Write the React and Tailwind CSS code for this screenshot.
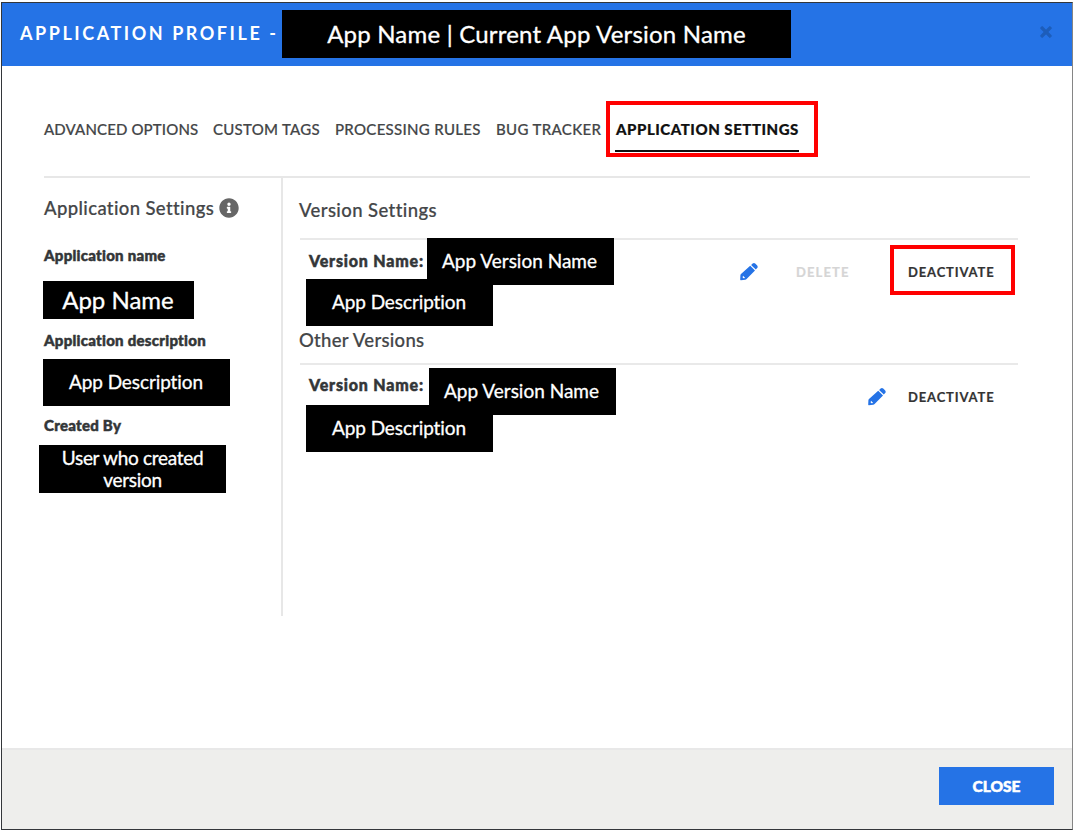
import React from "react";
import { FaInfoCircle, FaTimes } from "react-icons/fa";

function Pencil({ className = "" }) {
  return (
    <svg viewBox="0 0 18 18" width="18" height="18" className={"shrink-0 " + className}>
      <path
        fill="#2573e6"
        fillRule="evenodd"
        d="M.4 12.2Q.5 11.5 1 11L10.2 2.7 15 7.4 6.6 16Q6 16.7 5.2 16.7L.9 17.2Q.2 17.3.2 16.5Z M3 12.8 2.6 14.4 3.6 15.3 5.2 14.9Z"
      />
      <path fill="#2573e6" d="M11.1 1.9 12.6.6Q14 -.4 15.2 .6L17.2 2.6Q18.2 3.9 17.2 5.1L15.8 6.6Z" />
    </svg>
  );
}

function Mask({ className = "", children }) {
  return (
    <div className={"flex shrink-0 items-center justify-center bg-black text-center whitespace-nowrap text-white [-webkit-text-stroke:0.3px] " + className}>
      {children}
    </div>
  );
}

function Tab({ className = "", children }) {
  return <span className={"mt-[18px] block shrink-0 whitespace-nowrap text-[#444648] " + className}>{children}</span>;
}

function Label({ className = "", children }) {
  return (
    <b className={"block text-[15px] leading-[20px] font-black tracking-[0.27px] text-[#333638] [-webkit-text-stroke:0.5px] " + className}>
      {children}
    </b>
  );
}

function Version({ rowClass, labelClass, nameClass, descClass, children }) {
  return (
    <div className={"flex justify-between border-t-2 border-[#e9e9e9] " + rowClass}>
      <div className="w-[320px]">
        <div className="flex items-start">
          <b className={"ml-[9px] block w-[118px] shrink-0 text-[16px] leading-[20px] font-black tracking-[0.8px] whitespace-nowrap text-[#333638] [-webkit-text-stroke:0.5px] " + labelClass}>Version Name:</b>
          <Mask className={"h-[47px] w-[187px] pr-[2px] pb-px text-[19px] leading-6 " + nameClass}>App Version Name</Mask>
        </div>
        <Mask className={"ml-[6px] h-[47px] w-[187px] pr-px pb-px text-[19px] leading-6 tracking-[-0.1px] " + descClass}>App Description</Mask>
      </div>
      {children}
    </div>
  );
}

export default function App() {
  return (
    <div className="h-[834px] w-[1078px] overflow-hidden bg-white pt-[2px] pl-px font-['Lato',sans-serif] text-[#444648]">
      <div className="flex h-[828px] w-[1072px] flex-col border border-[#33363a] border-r-[#858585] bg-white">
        <header className="flex h-[63px] shrink-0 items-start bg-[#2573e6] pl-[18px] text-white">
          <h1 className="w-[262px] shrink-0 pt-[18px] text-[18px] leading-6 font-bold tracking-[2.55px] whitespace-nowrap">APPLICATION PROFILE -</h1>
          <Mask className="mt-[7px] h-[48px] w-[509px] text-[24px] tracking-[0.2px]">App Name | Current App Version Name</Mask>
          <button className="mt-[21px] ml-[247px] text-[#1d5dba]"><FaTimes size={16} className="[stroke-width:20] [stroke:currentColor]" /></button>
        </header>

        <main className="h-[682px] shrink-0 pl-[42px] [-webkit-text-stroke:0.2px]">
          <nav className="flex h-[112px] w-[986px] items-start border-b-2 border-[#e7e7e7] pt-[35px] text-[15px] leading-[20px] font-medium">
            <Tab className="w-[169px] tracking-[0.13px]">ADVANCED OPTIONS</Tab>
            <Tab className="w-[122px] tracking-[0.27px]">CUSTOM TAGS</Tab>
            <Tab className="w-[161px] tracking-[0.3px]">PROCESSING RULES</Tab>
            <Tab className="w-[110px] tracking-[0.35px]">BUG TRACKER</Tab>
            <div className="h-[56px] w-[212px] shrink-0 border-4 border-[#ff0000] pt-[14px] pl-[5px]">
              <div className="h-[33px] w-[184px] border-b-2 border-[#111] pl-px font-black tracking-[0.53px] whitespace-nowrap text-[#111]">APPLICATION SETTINGS</div>
            </div>
          </nav>

          <div className="flex h-[438px]">
            <aside className="w-[239px] shrink-0 border-r-2 border-[#e7e7e7]">
              <h2 className="flex items-center pt-[18px] text-[18.5px] leading-6 font-medium tracking-[0.37px] whitespace-nowrap">
                <span className="w-[175px]">Application Settings</span>
                <FaInfoCircle size={20} color="#666" />
              </h2>
              <Label className="mt-[25px]">Application name</Label>
              <Mask className="-ml-px mt-[16px] h-[38px] w-[151px] pr-px text-[24px]">App Name</Mask>
              <Label className="mt-[11px]">Application description</Label>
              <Mask className="-ml-px mt-[9px] h-[47px] w-[187px] pr-px pb-px text-[19px] tracking-[-0.1px]">App Description</Mask>
              <Label className="mt-[9px]">Created By</Label>
              <Mask className="-ml-[5px] mt-[10px] h-[48px] w-[187px] pb-px text-[19px] leading-[22px] tracking-[-0.3px]">User who created<br />version</Mask>
            </aside>

            <section className="ml-[17px] w-[718px]">
              <h2 className="-ml-px h-[60px] pt-[20px] text-[18.5px] leading-6 font-medium tracking-[0.4px]">Version Settings</h2>
              <Version rowClass="h-[89px]" labelClass="pt-[11px]" nameClass="-mt-[2px]" descClass="-mt-[6px]">
                <div className="flex h-[57px] items-start text-[13px] leading-[18px] font-bold">
                  <Pencil className="mt-[23px]" />
                  <span className="mt-[23px] ml-[38px] w-[94px] tracking-[1.1px] text-[#d5d5d5]">DELETE</span>
                  <button className="mt-[5px] mr-[3px] h-[50px] w-[125px] border-4 border-[#ff0000] pt-[3px] pl-[14px] text-left font-bold tracking-[0.85px] whitespace-nowrap text-[#333]">DEACTIVATE</button>
                </div>
              </Version>
              <h2 className="-ml-px h-[36px] pt-px text-[18.5px] leading-6 font-medium tracking-[0.3px]">Other Versions</h2>
              <Version rowClass="h-[91px]" labelClass="pt-[10px]" nameClass="mt-[3px] ml-[2px]" descClass="-mt-[10px]">
                <div className="flex h-[57px] items-start text-[13px] leading-[18px] font-bold">
                  <Pencil className="mt-[23px]" />
                  <button className="mt-[23px] mr-[23px] ml-[22px] w-[87px] text-left tracking-[0.85px] whitespace-nowrap text-[#333]">DEACTIVATE</button>
                </div>
              </Version>
            </section>
          </div>
        </main>

        <footer className="flex h-[81px] shrink-0 items-start justify-end border-t-2 border-[#e8e8e8] bg-[#eeeeec] pt-[17px] pr-[18px]">
          <button className="h-[38px] w-[115px] bg-[#2573e6] pt-px text-[15.5px] font-black text-white [-webkit-text-stroke:0.5px]">CLOSE</button>
        </footer>
      </div>
    </div>
  );
}
